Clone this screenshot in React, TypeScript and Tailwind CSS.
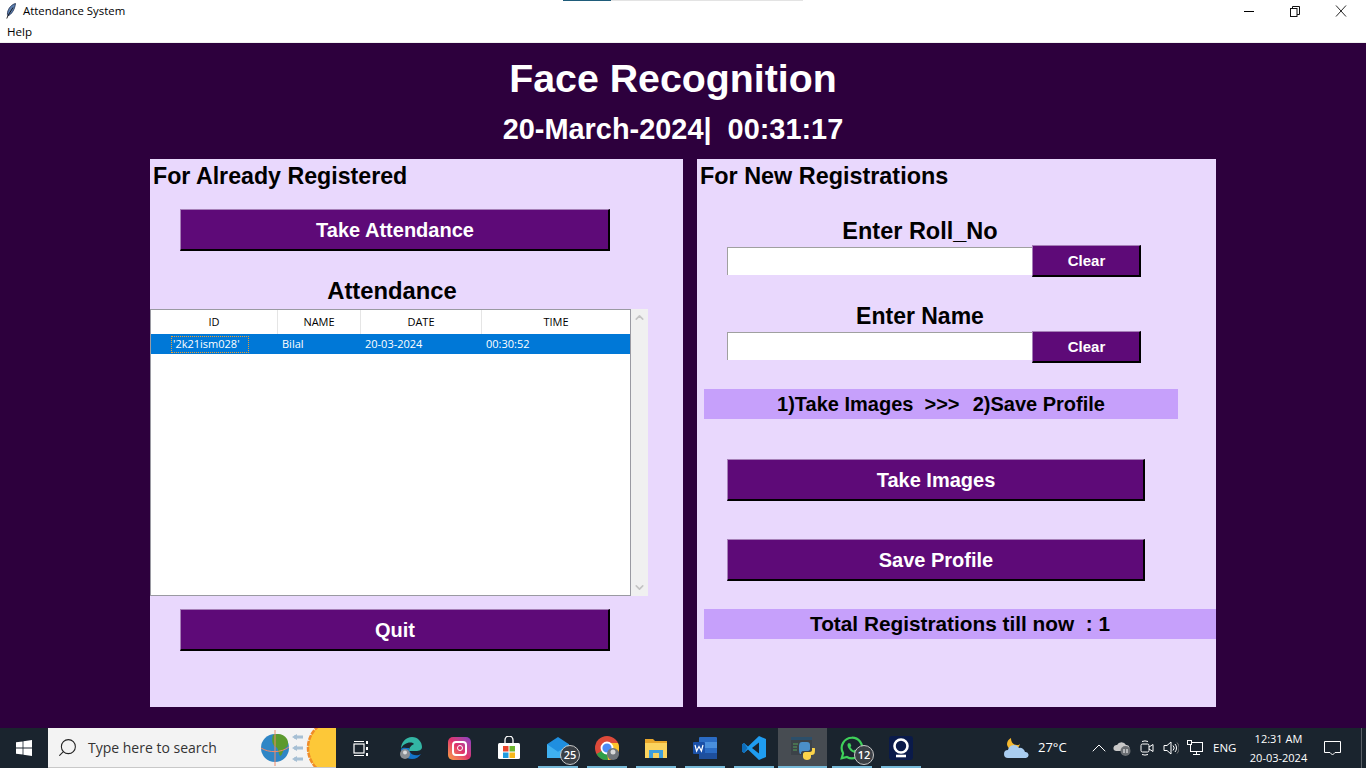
import { ChevronUp, ChevronDown, Search } from 'lucide-react';

const uiFont = "font-['Open_Sans','Noto_Sans',sans-serif]";

const PurpleButton = ({ label, className }: { label: string; className: string }) => (
  <button className={`block pl-[1px] bg-[#5e0a78] text-white font-bold border-t border-l border-t-[#a67fb8] border-l-[#a67fb8] border-b-2 border-r-2 border-b-black border-r-black ${className}`}>
    {label}
  </button>
);

const TextEntry = ({ className }: { className: string }) => (
  <div className={`w-[305px] h-[28px] bg-white border-t border-l border-t-[#a0a0a0] border-l-[#a0a0a0] ${className}`} />
);

const Badge = ({ n, className }: { n: string; className: string }) => (
  <span className={`absolute flex items-center justify-center w-[20px] h-[20px] rounded-full bg-[#3b4046] border border-[#c8c8c8] text-white text-[11px] font-semibold ${className}`}>
    {n}
  </span>
);

// taskbar slot, running apps get the blue underline
const Slot = ({ children, running, active, wide }: { children: React.ReactNode; running?: boolean; active?: boolean; wide?: boolean }) => (
  <div className={`relative flex items-center justify-center h-full ${wide ? 'w-[50px]' : 'w-[49px]'} ${active ? 'bg-[#474c52]' : ''}`}>
    {children}
    {running && (
      <div className={`absolute bottom-0 h-[2px] bg-[#76b9d8] ${active ? 'left-0 right-0' : 'left-[5px] right-[4px]'}`} />
    )}
  </div>
);

const App = () => {
  return (
    <div className={`w-[1366px] h-[768px] overflow-hidden flex flex-col bg-[#2d003d] font-['Liberation_Sans',sans-serif]`}>
      {/* Title bar */}
      <div className="relative h-[22px] bg-white flex items-center shrink-0">
        <div className="absolute top-0 left-[563px] w-[48px] h-px bg-[#1f5c7a]" />
        <div className="absolute top-0 left-[611px] w-[192px] h-px bg-[#e3e3e3]" />
        <svg width="12" height="16" viewBox="0 0 12 16" className="ml-[5px]">
          <path d="M10.5 0.5C6.5 1.5 3.5 5 2.5 9.5 2.2 11 2.5 12.2 3 12.8 6.5 11.5 9.8 6.5 10.5 0.5Z" fill="#5b7fb0" stroke="#1d2b4a" strokeWidth="0.8" />
          <path d="M8 4.5 3 12.5 1.8 15.5" fill="none" stroke="#111" strokeWidth="0.9" />
        </svg>
        <span className={`ml-[6px] text-[11.4px] text-black ${uiFont}`}>Attendance System</span>
        <div className="ml-auto mr-[2px] flex items-center h-full">
          <div className="w-[46px] flex justify-center">
            <div className="w-[10px] h-px bg-black" />
          </div>
          <div className="w-[46px] flex justify-center">
            <svg width="10" height="11" viewBox="0 0 10 11" fill="none" stroke="#111" strokeWidth="1">
              <rect x="0.5" y="2.5" width="6.5" height="8" />
              <path d="M2.5 2.5V0.5H9.5V8.5H7" />
            </svg>
          </div>
          <div className="w-[46px] flex justify-center">
            <svg width="12" height="12" viewBox="0 0 12 12" stroke="#111" strokeWidth="0.9">
              <path d="M1 0.5 11 11.5M11 0.5 1 11.5" />
            </svg>
          </div>
        </div>
      </div>

      {/* Menu bar */}
      <div className={`h-[21px] shrink-0 bg-white border-b border-b-[#f0f0f0] pl-[7px] pt-[1px] text-[11.6px] leading-[17px] text-black ${uiFont}`}>Help</div>

      {/* Header */}
      <div className="h-[116px] shrink-0 pr-[20px] flex flex-col items-center text-white font-bold">
        <div className="text-[39.3px] leading-[44px] mt-[13px]">Face Recognition</div>
        <div className="text-[28.9px] leading-[34px] mt-[12px] whitespace-pre">20-March-2024|  00:31:17</div>
      </div>

      {/* Panels */}
      <div className="flex gap-[14px] pl-[150px] h-[548px] shrink-0">
        <div className="w-[533px] h-full bg-[#e9d8fd] relative">
          <div className="pl-[3px] pt-[3px] text-[23.2px] leading-[28px] font-bold text-black">For Already Registered</div>
          <PurpleButton label="Take Attendance" className="mt-[19px] ml-[30px] w-[430px] h-[42px] text-[20px]" />
          <div className="mt-[25px] w-[484px] text-center text-[23.8px] leading-[30px] font-bold text-black">Attendance</div>
          <div className="mt-[3px] flex h-[287px]">
            <div className={`w-[481px] h-full bg-white border border-[#9a9aa2] text-[11px] ${uiFont}`}>
              <div className="grid grid-cols-[127px_83px_121px_148px] h-[24px] text-black">
                {['ID', 'NAME', 'DATE', 'TIME'].map((col, i) => (
                  <div key={col} className={`flex items-center justify-center ${i < 3 ? 'border-r border-r-[#e5e5e5]' : ''}`}>{col}</div>
                ))}
              </div>
              <div className="grid grid-cols-[127px_83px_121px_148px] h-[20px] bg-[#0078d7] text-white items-center">
                <div className="pl-[20px]">
                  <span className="inline-flex items-center h-[17px] w-[78px] pl-[1px] border border-dotted border-[#f0a030]">'2k21ism028'</span>
                </div>
                <div className="pl-[4px]">Bilal</div>
                <div className="pl-[4px]">20-03-2024</div>
                <div className="pl-[4px]">00:30:52</div>
              </div>
            </div>
            <div className="w-[17px] h-full bg-[#f0f0f0] flex flex-col justify-between items-center py-[2px]">
              <ChevronUp size={13} strokeWidth={3} color="#c4c4c4" />
              <ChevronDown size={13} strokeWidth={3} color="#c4c4c4" />
            </div>
          </div>
          <PurpleButton label="Quit" className="mt-[13px] ml-[30px] w-[430px] h-[42px] text-[20px]" />
        </div>

        <div className="w-[519px] h-full bg-[#e9d8fd]">
          <div className="pl-[3px] pt-[3px] text-[23.4px] leading-[28px] font-bold text-black">For New Registrations</div>
          <div className="mt-[27px] ml-[73px] w-[300px] text-center text-[23.5px] leading-[28px] font-bold text-black">Enter Roll_No</div>
          <div className="flex items-start ml-[30px]">
            <TextEntry className="mt-[2px]" />
            <PurpleButton label="Clear" className="w-[109px] h-[32px] pt-[1px] text-[15px]" />
          </div>
          <div className="mt-[24px] ml-[73px] w-[300px] text-center text-[23px] leading-[30px] font-bold text-black">Enter Name</div>
          <div className="flex items-start ml-[30px]">
            <TextEntry className="mt-[1px]" />
            <PurpleButton label="Clear" className="w-[109px] h-[32px] pt-[1px] text-[15px]" />
          </div>
          <div className="mt-[26px] ml-[7px] w-[474px] h-[30px] bg-[#c6a0fb] flex items-center justify-center text-[20px] font-bold text-black whitespace-pre">1)Take Images  {'>>>'}  <span className="ml-[2px]">2)Save Profile</span></div>
          <PurpleButton label="Take Images" className="mt-[40px] ml-[30px] w-[418px] h-[42px] text-[20px]" />
          <PurpleButton label="Save Profile" className="mt-[38px] ml-[30px] w-[418px] h-[42px] text-[20px]" />
          <div className="mt-[28px] ml-[7px] w-[512px] h-[30px] bg-[#c6a0fb] flex items-center justify-center text-[20.8px] font-bold text-black whitespace-pre">Total Registrations till now  : 1</div>
        </div>
      </div>

      <div className="flex-1" />

      {/* Taskbar */}
      <div className={`h-[40px] shrink-0 flex items-center bg-[#1a242e] text-white ${uiFont}`}>
        <div className="w-[48px] h-full flex items-center justify-center">
          <svg width="16" height="16" viewBox="0 0 16 16" fill="#fff">
            <path d="M0 2.3 6.6 1.4V7.6H0ZM7.4 1.3 16 0V7.6H7.4ZM0 8.4H6.6V14.6L0 13.7ZM7.4 8.4H16V16L7.4 14.7Z" />
          </svg>
        </div>
        <div className="relative w-[288px] h-full bg-[#f3f3f3] border-b border-b-[#c8c8c8] flex items-center overflow-hidden">
          <Search size={21} strokeWidth={1.2} color="#222" className="ml-[9px] -scale-x-100" />
          <span className="ml-[10px] text-[14px] text-[#333]">Type here to search</span>
          <svg width="84" height="40" viewBox="0 0 84 40" className="absolute right-0 top-0">
            <circle cx="23" cy="20" r="14" fill="#2f86c6" />
            <path d="M21 7c5-2 11-1 14 4 2 4 1 8-2 9-3 3-2 7-5 8-2-3-1-7-4-9-3-1-5-6-3-12Z" fill="#5c9a2e" />
            <path d="M9 20c8 5 20 5 28-1" fill="none" stroke="#f08a6a" strokeWidth="1" />
            <path d="M23 2V38" stroke="#f08a6a" strokeWidth="1" />
            <path d="M42 9H51M42 20H51M42 31H51" stroke="#a6bfd4" strokeWidth="3" />
            <path d="M40 9 45 6V12ZM40 20 45 17V23ZM40 31 45 28V34Z" fill="#a6bfd4" />
            <circle cx="84" cy="20" r="28" fill="#fdc838" stroke="#f08c28" strokeWidth="2.500" strokeDasharray="5 1" />
          </svg>
        </div>

        <Slot wide>
          <svg width="17" height="17" viewBox="0 0 17 17" fill="none" stroke="#fff" strokeWidth="1.2">
            <rect x="1" y="4" width="10" height="9" />
            <path d="M1 1.5H11M1 15.5H11" />
            <path d="M14 1V4M14 7V10M14 13V16" strokeWidth="2" />
          </svg>
        </Slot>
        <Slot>
          <svg width="24" height="24" viewBox="0 0 24 24">
            <path d="M2 13C2 6 7 1 13 1c6 0 10 5 10 10 0 3-3 4-6 4H10c0-4 3-6 5-7-3-3-11-1-13 5Z" fill="#33b6a4" />
            <path d="M2 13c0 6 5 10 11 10 4 0 7-2 9-5-3 2-9 2-11-2-1-2-1-3-1-4-3 0-6-1-8 1Z" fill="#1374c8" />
            <circle cx="6" cy="18" r="5" fill="#8b8f94" />
            <circle cx="6" cy="16.5" r="2" fill="#dcdcdc" />
          </svg>
        </Slot>
        <Slot>
          <div className="w-[23px] h-[23px] rounded-[5px] bg-gradient-to-tr from-[#f9a03a] via-[#e0306a] to-[#8a3ac8] flex items-center justify-center">
            <div className="w-[15px] h-[15px] rounded-[4px] border-2 border-white flex items-center justify-center">
              <div className="w-[6px] h-[6px] rounded-full border border-white" />
            </div>
          </div>
        </Slot>
        <Slot>
          <svg width="24" height="24" viewBox="0 0 24 24">
            <path d="M8 7V4a4 4 0 0 1 8 0v3" fill="none" stroke="#fff" strokeWidth="1.3" />
            <rect x="1" y="7" width="22" height="16" rx="1.5" fill="#fff" />
            <rect x="6" y="10" width="5.5" height="5.5" fill="#e8452c" />
            <rect x="12.5" y="10" width="5.5" height="5.5" fill="#6db52e" />
            <rect x="6" y="16.5" width="5.5" height="5.5" fill="#1f9be0" />
            <rect x="12.5" y="16.5" width="5.5" height="5.5" fill="#f7b81a" />
          </svg>
        </Slot>
        <Slot running>
          <svg width="24" height="22" viewBox="0 0 26 24">
            <path d="M1 8 13 0l12 8v15H1Z" fill="#1f8fe0" />
            <path d="M1 8 13 16 25 8V23H1Z" fill="#3fb0f0" />
          </svg>
          <Badge n="25" className="left-[27px] top-[17px]" />
        </Slot>
        <Slot running>
          <svg width="24" height="24" viewBox="0 0 24 24">
            <circle cx="12" cy="12" r="12" fill="#dd4a3a" />
            <path d="M12 12 1.6 18A12 12 0 0 0 13 24Z" fill="#2f9e48" />
            <path d="M12 12 13 24A12 12 0 0 0 23 7H12Z" fill="#fbc52c" />
            <circle cx="12" cy="12" r="5.5" fill="#4c8bf5" stroke="#fff" strokeWidth="1.8" />
            <circle cx="18" cy="18" r="6" fill="#70757a" />
            <circle cx="18" cy="16" r="2.5" fill="#d8d8d8" />
          </svg>
        </Slot>
        <Slot running>
          <svg width="22" height="20" viewBox="0 0 22 20">
            <path d="M0 1H8l2 2H22V20H0Z" fill="#e8a62a" />
            <path d="M0 5H22V20H0Z" fill="#fbd35e" />
            <path d="M4 20V12H18V20H14V15H8V20Z" fill="#3f9fdc" />
          </svg>
        </Slot>
        <Slot running>
          <svg width="24" height="22" viewBox="0 0 24 22">
            <rect x="6" y="0" width="18" height="22" rx="1" fill="#2b6cc4" />
            <rect x="6" y="5" width="18" height="6" fill="#4a8fdc" />
            <rect x="6" y="16" width="18" height="6" fill="#1e4f9c" />
            <rect x="0" y="5" width="12" height="12" rx="1" fill="#1a50a8" />
            <path d="M2 8 3.6 14 6 9.5 8.4 14 10 8" fill="none" stroke="#fff" strokeWidth="1.2" />
          </svg>
        </Slot>
        <Slot running>
          <svg width="24" height="24" viewBox="0 0 24 24">
            <path d="M17 0 24 3V21L17 24 6 13.5 2 17 0 15.5V8.500L2 7 6 10.500Z" fill="#1f9cf0" />
            <path d="M17 6.500 10 12 17 17.500Z" fill="#1a242e" />
            <path d="M2 7 0 8.500V15.500L2 17 5.500 12Z" fill="#0f6cb8" />
          </svg>
        </Slot>
        <Slot running active>
          <svg width="24" height="24" viewBox="0 0 24 24">
            <rect x="0" y="1" width="21" height="18" fill="#3c4248" />
            <rect x="0" y="1" width="21" height="3" fill="#2c4f6a" />
            <path d="M2 8H7M2 11H6M2 14H6" stroke="#57a05a" strokeWidth="1.2" />
            <path d="M8 12c0-3 0-6 3-6h5c2 0 3 1 3 3v4c0 1-1 2-2 2h-5c-1 0-2 1-2 2v1H9c-1-1-1-4-1-6Z" fill="#4b8fc8" />
            <path d="M24 13c0 3 0 6-3 6h-1v2c0 2-2 3-4 3s-4-1-4-3v-3c0-1 1-2 2-2h5c1 0 2-1 2-2v-2h2c1 0 1 0 1 1Z" fill="#fbd34a" />
          </svg>
        </Slot>
        <Slot running>
          <svg width="26" height="26" viewBox="0 0 24 24">
            <path d="M12 2.500a9.500 9.500 0 0 0-8.200 14.300L2.500 21.500l4.800-1.250A9.500 9.500 0 1 0 12 2.500Z" fill="none" stroke="#3fd05a" strokeWidth="2" />
            <path d="M8.500 7.500c-1 1-1 3 .8 5.500s4 3.700 5.700 3.500c1.200-.2 2-1.200 2-2l-2.300-1.200-1 1c-1.300-.5-2.600-1.800-3.200-3.200l.9-1-1-2.500Z" fill="#3fd05a" />
          </svg>
          <Badge n="12" className="left-[27px] top-[17px]" />
        </Slot>
        <Slot running>
          <div className="w-[24px] h-[24px] rounded-[3px] bg-[#0a1a4a] flex items-center justify-center">
            <svg width="18" height="20" viewBox="0 0 18 20" fill="none" stroke="#fff" strokeWidth="2.600">
              <circle cx="9" cy="8" r="6.500" />
              <path d="M4 18H14" />
            </svg>
          </div>
        </Slot>

        {/* Tray */}
        <div className="ml-auto flex items-center h-full text-[13px]">
          <svg width="26" height="26" viewBox="0 0 26 26">
            <path d="M7 3C7 7 9 10 13 10c1 0 2 0 3-1-1 4-4 6-7 6-4 0-6-4-6-6 0-3 2-5 4-6Z" fill="#f5b82e" />
            <path d="M4 23a4 4 0 0 1 0-8 6 6 0 0 1 11-2 5 5 0 0 1 6 4 3 3 0 0 1 1 6Z" fill="#a9cdf0" />
          </svg>
          <span className="ml-[8px] w-[49px]">27°C</span>
          <ChevronUp size={24} strokeWidth={1} className="mr-[2px]" />
          <svg width="18" height="16" viewBox="0 0 18 16" className="mr-[8px]">
            <path d="M3 11a3 3 0 0 1 1-6 5 5 0 0 1 9 0 3 3 0 0 1 1 6Z" fill="#c8c8c8" />
            <circle cx="12.500" cy="11" r="5" fill="#6a6e72" />
            <path d="M11 9V13M14 9V13" stroke="#fff" strokeWidth="1" />
          </svg>
          <svg width="16" height="18" viewBox="0 0 16 18" fill="none" stroke="#fff" strokeWidth="1" className="mr-[8px]">
            <rect x="2" y="5" width="8" height="8" rx="1.500" />
            <path d="M10 8 14 5.500V12.500L10 10" />
            <path d="M3 2.500A8 8 0 0 1 9 2.500M3 15.500A8 8 0 0 0 9 15.500" />
          </svg>
          <svg width="16" height="16" viewBox="0 0 16 16" fill="none" stroke="#fff" strokeWidth="1" className="mr-[8px]">
            <path d="M1 5.500H4L8 2V14L4 10.500H1Z" />
            <path d="M10 5.500a3.500 3.500 0 0 1 0 5M12 4a6 6 0 0 1 0 8" />
            <path d="M14 2.500a8 8 0 0 1 0 11" stroke="#777" />
          </svg>
          <svg width="16" height="16" viewBox="0 0 16 16" fill="none" stroke="#fff" strokeWidth="1" className="mr-[10px]">
            <rect x="3.500" y="2.500" width="12" height="9" />
            <rect x="0.500" y="0.500" width="4" height="4" fill="#1a242e" />
            <path d="M9.500 11.500V14.500M6 14.500H13" />
          </svg>
          <span className="text-[11.5px] w-[23px] mr-[14px]">ENG</span>
          <div className="w-[57px] flex flex-col items-center text-[11px] leading-[19px] whitespace-nowrap">
            <span>12:31 AM</span>
            <span>20-03-2024</span>
          </div>
          <div className="w-[54px] flex justify-center pr-[3px]">
            <svg width="17" height="17" viewBox="0 0 17 17" fill="none" stroke="#fff" strokeWidth="1">
              <path d="M0.500 1.500H16.500V12.500H11L8.500 15 6 12.500H0.500Z" />
            </svg>
          </div>
          <div className="w-[5px] h-full border-l border-l-[#5a6068]" />
        </div>
      </div>
    </div>
  );
};

export default App;
